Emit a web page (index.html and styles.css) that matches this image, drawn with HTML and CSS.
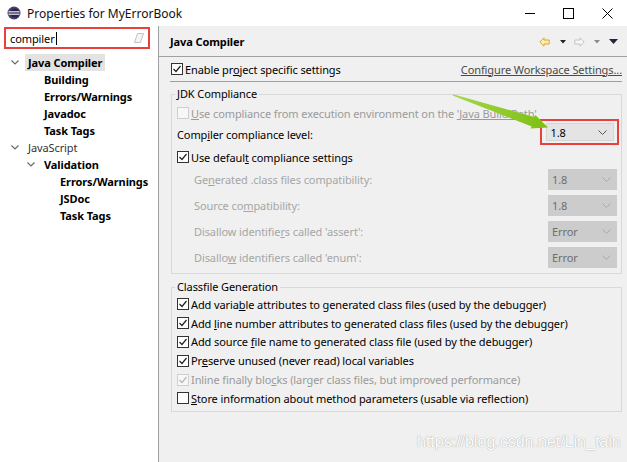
FILE: index.html
```html
<!DOCTYPE html>
<html lang="en">
<head>
<meta charset="utf-8">
<title>Properties for MyErrorBook</title>
<link rel="stylesheet" href="styles.css">
</head>
<body>
<div class="window">
  <div class="titlebar">
    <svg class="app-icon" width="14" height="14" viewBox="0 0 14 14">
      <circle cx="7" cy="7" r="6.5" fill="#47406a"/>
      <circle cx="7.8" cy="7" r="4.6" fill="#2a2350"/>
      <rect x="1.5" y="5.2" width="11" height="1.2" fill="#e8e6f0"/>
      <rect x="1.5" y="7.6" width="11" height="1.2" fill="#e8e6f0"/>
    </svg>
    <span class="title">Properties for MyErrorBook</span>
    <div class="controls">
      <span class="ctl"><svg width="10" height="10" viewBox="0 0 10 10"><line x1="0" y1="5.5" x2="10" y2="5.5" stroke="#000" stroke-width="1"/></svg></span>
      <span class="ctl"><svg width="11" height="11" viewBox="0 0 11 11"><rect x="0.5" y="0.5" width="10" height="10" fill="none" stroke="#000" stroke-width="1"/></svg></span>
      <span class="ctl"><svg width="11" height="11" viewBox="0 0 11 11"><path d="M0.5 0.5 L10.5 10.5 M10.5 0.5 L0.5 10.5" stroke="#000" stroke-width="1"/></svg></span>
    </div>
  </div>

  <div class="main">
    <aside class="sidebar">
      <div class="search">
        <span class="search-text">compiler</span><span class="caret"></span>
        <svg class="eraser" width="10" height="10" viewBox="0 0 10 10"><path d="M3.5 0.5 H9.5 L6.5 9.5 H0.5 Z" fill="#f4f4f4" stroke="#c4c4c4" stroke-width="1"/></svg>
      </div>
      <ul class="tree">
        <li class="node l0"><span class="twisty"><svg width="8" height="5" viewBox="0 0 8 5"><polyline points="0.5,0.5 4,4 7.5,0.5" fill="none" stroke="#666" stroke-width="1.1"/></svg></span><span class="label bold selected">Java Compiler</span></li>
        <li class="node l1"><span class="twisty"></span><span class="label bold">Building</span></li>
        <li class="node l1"><span class="twisty"></span><span class="label bold">Errors/Warnings</span></li>
        <li class="node l1"><span class="twisty"></span><span class="label bold">Javadoc</span></li>
        <li class="node l1"><span class="twisty"></span><span class="label bold">Task Tags</span></li>
        <li class="node l0"><span class="twisty"><svg width="8" height="5" viewBox="0 0 8 5"><polyline points="0.5,0.5 4,4 7.5,0.5" fill="none" stroke="#666" stroke-width="1.1"/></svg></span><span class="label plain">JavaScript</span></li>
        <li class="node l1"><span class="twisty"><svg width="8" height="5" viewBox="0 0 8 5"><polyline points="0.5,0.5 4,4 7.5,0.5" fill="none" stroke="#666" stroke-width="1.1"/></svg></span><span class="label bold">Validation</span></li>
        <li class="node l2"><span class="twisty"></span><span class="label bold">Errors/Warnings</span></li>
        <li class="node l2"><span class="twisty"></span><span class="label bold">JSDoc</span></li>
        <li class="node l2"><span class="twisty"></span><span class="label bold">Task Tags</span></li>
      </ul>
    </aside>

    <section class="content">
      <div class="header">
        <h1>Java Compiler</h1>
        <div class="nav">
          <svg class="nav-back" width="11" height="10" viewBox="0 0 11 10"><path d="M0.8 5 L5 0.8 V3 H10.2 V7 H5 V9.2 Z" fill="#fdeeb5" stroke="#d9a82a" stroke-width="1"/></svg>
          <svg class="nav-tri" width="6" height="4" viewBox="0 0 6 4"><path d="M0 0 H6 L3 3.5 Z" fill="#222"/></svg>
          <svg class="nav-fwd" width="11" height="10" viewBox="0 0 11 10"><path d="M10.2 5 L6 0.8 V3 H0.8 V7 H6 V9.2 Z" fill="#f6f6f6" stroke="#c4c4c4" stroke-width="1"/></svg>
          <svg class="nav-tri2" width="6" height="4" viewBox="0 0 6 4"><path d="M0 0 H6 L3 3.5 Z" fill="#8a8a8a"/></svg>
          <svg class="nav-menu" width="9" height="5" viewBox="0 0 9 5"><path d="M0 0 H9 L4.5 5 Z" fill="#2a2040"/></svg>
        </div>
      </div>

      <div class="enable-row">
        <label class="check"><span class="box"><svg width="10" height="10" viewBox="0 0 10 10"><polyline points="1.5,5 4,7.5 8.5,2" fill="none" stroke="#222" stroke-width="1.2"/></svg></span><span class="ctext">Enable pr<u>o</u>ject specific settings</span></label>
        <a class="link">Configure Workspace Settings...</a>
      </div>

      <fieldset class="group jdk">
        <legend>JDK Compliance</legend>
        <div class="row r-use">
          <label class="check disabled"><span class="box"></span><span class="ctext"><u>U</u>se compliance from execution environment on the <span class="ulink">'Java Build Path'</span></span></label>
        </div>
        <div class="row r-level">
          <span class="text">Comp<u>i</u>ler compliance level:</span>
          <div class="redbox">
            <div class="combo active"><span>1.8</span><svg width="9" height="5" viewBox="0 0 9 5"><polyline points="0.5,0.5 4.5,4.5 8.5,0.5" fill="none" stroke="#555" stroke-width="1"/></svg></div>
          </div>
        </div>
        <div class="row r-default">
          <label class="check"><span class="box"><svg width="10" height="10" viewBox="0 0 10 10"><polyline points="1.5,5 4,7.5 8.5,2" fill="none" stroke="#222" stroke-width="1.2"/></svg></span><span class="ctext">Use defaul<u>t</u> compliance settings</span></label>
        </div>
        <div class="row r-opt first">
          <span class="text dim">Ge<u>n</u>erated .class files compatibility:</span>
          <div class="combo off"><span>1.8</span><svg width="9" height="5" viewBox="0 0 9 5"><polyline points="0.5,0.5 4.5,4.5 8.5,0.5" fill="none" stroke="#aaa" stroke-width="1"/></svg></div>
        </div>
        <div class="row r-opt">
          <span class="text dim">Source co<u>m</u>patibility:</span>
          <div class="combo off"><span>1.8</span><svg width="9" height="5" viewBox="0 0 9 5"><polyline points="0.5,0.5 4.5,4.5 8.5,0.5" fill="none" stroke="#aaa" stroke-width="1"/></svg></div>
        </div>
        <div class="row r-opt">
          <span class="text dim">Disallow identifie<u>r</u>s called 'assert':</span>
          <div class="combo off"><span>Error</span><svg width="9" height="5" viewBox="0 0 9 5"><polyline points="0.5,0.5 4.5,4.5 8.5,0.5" fill="none" stroke="#aaa" stroke-width="1"/></svg></div>
        </div>
        <div class="row r-opt">
          <span class="text dim">Disallo<u>w</u> identifiers called 'enum':</span>
          <div class="combo off"><span>Error</span><svg width="9" height="5" viewBox="0 0 9 5"><polyline points="0.5,0.5 4.5,4.5 8.5,0.5" fill="none" stroke="#aaa" stroke-width="1"/></svg></div>
        </div>
      </fieldset>

      <fieldset class="group classfile">
        <legend>Classfile Generation</legend>
        <div class="row r-cf"><label class="check"><span class="box"><svg width="10" height="10" viewBox="0 0 10 10"><polyline points="1.5,5 4,7.5 8.5,2" fill="none" stroke="#222" stroke-width="1.2"/></svg></span><span class="ctext">Add varia<u>b</u>le attributes to generated class files (used by the debugger)</span></label></div>
        <div class="row r-cf"><label class="check"><span class="box"><svg width="10" height="10" viewBox="0 0 10 10"><polyline points="1.5,5 4,7.5 8.5,2" fill="none" stroke="#222" stroke-width="1.2"/></svg></span><span class="ctext">Add <u>l</u>ine number attributes to generated class files (used by the debugger)</span></label></div>
        <div class="row r-cf"><label class="check"><span class="box"><svg width="10" height="10" viewBox="0 0 10 10"><polyline points="1.5,5 4,7.5 8.5,2" fill="none" stroke="#222" stroke-width="1.2"/></svg></span><span class="ctext">Add source <u>f</u>ile name to generated class file (used by the debugger)</span></label></div>
        <div class="row r-cf"><label class="check"><span class="box"><svg width="10" height="10" viewBox="0 0 10 10"><polyline points="1.5,5 4,7.5 8.5,2" fill="none" stroke="#222" stroke-width="1.2"/></svg></span><span class="ctext">Pr<u>e</u>serve unused (never read) local variables</span></label></div>
        <div class="row r-cf"><label class="check disabled"><span class="box"><svg width="10" height="10" viewBox="0 0 10 10"><polyline points="1.5,5 4,7.5 8.5,2" fill="none" stroke="#b8b8b8" stroke-width="1.2"/></svg></span><span class="ctext">Inline finally blo<u>c</u>ks (larger class files, but improved performance)</span></label></div>
        <div class="row r-cf"><label class="check"><span class="box"></span><span class="ctext"><u>S</u>tore information about method parameters (usable via reflection)</span></label></div>
      </fieldset>
    </section>
  </div>

  <svg class="arrow" width="627" height="462" viewBox="0 0 627 462">
    <defs>
      <linearGradient id="ag" x1="453" y1="95" x2="548" y2="127" gradientUnits="userSpaceOnUse">
        <stop offset="0" stop-color="#a6d84a"/>
        <stop offset="1" stop-color="#7cbf12"/>
      </linearGradient>
    </defs>
    <polygon points="453,94.2 534.0,116.9 535.4,115.0 548,127.5 530.4,128.6 531.7,126.4 452.6,95.6" fill="url(#ag)"/>
  </svg>
  <div class="watermark">https://blog.csdn.net/Lin_tain</div>
</div>
</body>
</html>
```

FILE: styles.css
```css
* { box-sizing: border-box; }

body {
  margin: 0;
  width: 627px;
  height: 462px;
  overflow: hidden;
  background: #f0f0f0;
  font-family: "Noto Sans", "Open Sans", sans-serif;
  font-size: 11px;
  letter-spacing: -0.1px;
  color: #1a1a1a;
}

.window { position: relative; width: 627px; height: 462px; }

/* title bar */
.titlebar { height: 26px; background: #fff; display: flex; align-items: center; }
.app-icon { margin-left: 7px; }
.title { margin-left: 6px; font-size: 12px; color: #111; letter-spacing: 0; }
.controls { margin-left: auto; display: flex; height: 26px; }
.ctl { width: 39px; display: flex; align-items: center; justify-content: center; }

/* main area */
.main { display: flex; height: 436px; }

.sidebar { width: 159px; flex: none; background: #fff; border-right: 1px solid #a0a0a0; }

.search {
  margin: 1px 0 0 4px;
  width: 146px;
  height: 22px;
  border: 2px solid #e8403b;
  display: flex;
  align-items: center;
  padding-left: 4px;
  color: #000;
}
.caret { width: 1px; height: 13px; background: #000; margin-left: 1px; }
.eraser { margin-left: auto; margin-right: 4px; }

.tree { list-style: none; margin: 5px 0 0; padding: 0; }
.node { height: 17px; display: flex; align-items: center; }
.l0 { padding-left: 7px; }
.l1 { padding-left: 23px; }
.l2 { padding-left: 39px; }
.twisty { width: 16px; height: 17px; display: flex; align-items: center; justify-content: center; flex: none; }
.label { margin-left: 2px; padding: 0 3px; height: 17px; line-height: 17px; white-space: nowrap; color: #000; }
.bold { font-weight: 700; }
.plain { color: #333; }
.selected { background: #e3e3e3; }

/* content */
.content { flex: 1; min-width: 0; display: flex; flex-direction: column; }

.header {
  height: 31px;
  border-bottom: 1px solid #a0a0a0;
  display: flex;
  align-items: center;
  padding-left: 11px;
}
.header h1 { margin: 0; font-size: 11px; font-weight: 700; color: #000; }
.nav { margin-left: auto; display: flex; align-items: center; height: 100%; padding-top: 1px; }
.nav-back { margin-right: 10px; }
.nav-tri { margin-right: 8px; }
.nav-fwd { margin-right: 9px; }
.nav-tri2 { margin-right: 9px; }
.nav-menu { margin-right: 9px; }

.enable-row {
  height: 25px;
  margin: 0 5px 0 11px;
  border-bottom: 1px solid #a0a0a0;
  display: flex;
  align-items: center;
  white-space: nowrap;
}
.enable-row .check { margin-left: 1px; }
.link { margin-left: auto; color: #4a4a4a; text-decoration: underline; }

.check { display: flex; align-items: center; white-space: nowrap; color: #000; }
.ctext { white-space: pre; }
.box {
  width: 12px;
  height: 12px;
  flex: none;
  border: 1px solid #333;
  background: #fff;
  margin-right: 2px;
  display: flex;
  align-items: center;
  justify-content: center;
}
.check.disabled { color: #9a9a9a; }
.check.disabled .box { border-color: #cfcfcf; background: #f7f7f7; }
.ulink { text-decoration: underline; }

u { text-decoration: underline; }

/* groups */
.group {
  margin: 4px 5px 0 12px;
  border: 1px solid #d9d9d9;
  padding: 0 4px 5px 5px;
  min-width: 0;
}
.group legend { padding: 0 2px; margin-left: -2px; line-height: 16px; color: #000; }
.classfile { margin-top: 5px; padding-bottom: 3px; }

.row { display: flex; align-items: center; white-space: nowrap; }
.r-use { height: 20px; margin-top: 1px; }
.r-level { height: 23px; }
.r-default { height: 22px; }
.r-opt { height: 21px; margin-top: 5px; }
.r-opt.first { margin-top: 1px; }
.r-opt .text { padding-left: 17px; }
.r-cf { height: 18.8px; }

.text { color: #000; }
.dim { color: #a6a6a6; }

.redbox {
  margin-left: auto;
  margin-right: -2px;
  align-self: flex-start;
  margin-top: -4px;
  width: 79px;
  height: 26px;
  border: 2px solid #e8403b;
  display: flex;
  align-items: center;
  justify-content: center;
}

.combo {
  display: flex;
  align-items: center;
  justify-content: space-between;
  padding: 0 6px 0 4px;
}
.combo.active {
  width: 68px;
  height: 18px;
  background: #e4e4e4;
  border: 1px solid #d6d6d6;
  color: #000;
}
.combo.off {
  margin-left: auto;
  width: 69px;
  height: 21px;
  background: #cccccc;
  color: #6e6e6e;
}

/* overlays */
.arrow { position: absolute; left: 0; top: 0; pointer-events: none; }
.watermark {
  position: absolute;
  left: 417px;
  top: 433px;
  font-family: "Liberation Sans", Arial, sans-serif;
  font-size: 16px;
  letter-spacing: 0;
  color: #ffffff;
  text-shadow: 0 0 1px #a8a8a8, 0 0 1px #b8b8b8;
}
```
